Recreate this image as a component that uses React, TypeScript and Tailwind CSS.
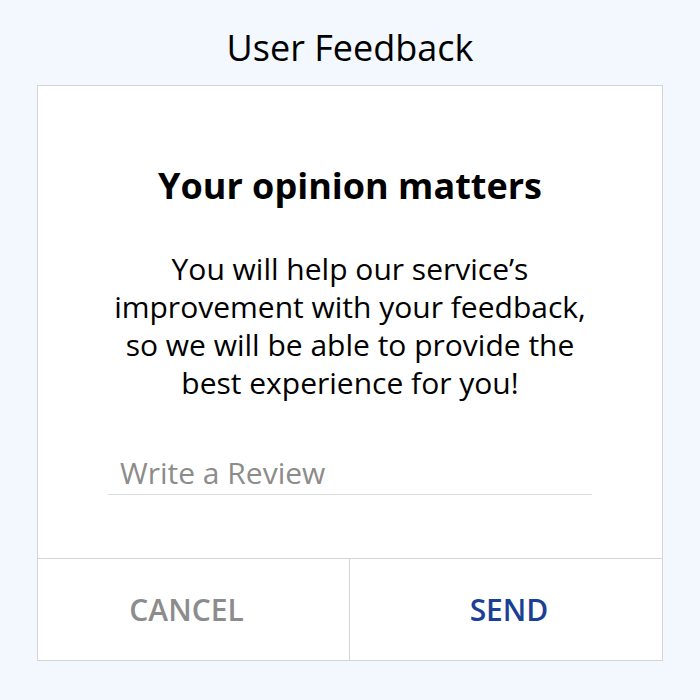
import React from "react";

export default function App() {
  return (
    <div
      className="w-[700px] h-[700px] bg-[#f3f7fe] flex flex-col items-center"
      style={{ fontFamily: '"Open Sans", sans-serif' }}
    >
      <h1 className="text-[36px] leading-[48px] text-black mt-[24px] mb-[13px]">User Feedback</h1>
      <div className="w-[626px] h-[576px] bg-white border border-[#d4d4d4] flex flex-col">
        <div className="flex-1 flex flex-col items-center">
          <h2 className="font-bold leading-[44px] text-black mt-[78px] text-[36px]">Your opinion matters</h2>
          <p className="text-[30px] leading-[38px] text-black text-center mt-[42px] w-[490px]">
            You will help our service’s improvement with your feedback, so we will be able to provide the best experience for you!
          </p>
          <div className="w-[484px] mt-[51px] border-b border-[#dddddd] pb-[1px] px-[12px]">
            <input
              placeholder="Write a Review"
              className="w-full text-[30px] leading-[40px] outline-none placeholder:text-[#8c8c8c] bg-transparent"
              style={{ fontFamily: '"Open Sans", sans-serif' }}
            />
          </div>
        </div>
        <div className="h-[102px] border-t border-[#d4d4d4] grid grid-cols-2">
          <button className="text-[30px] font-semibold text-[#8c8c8c] border-r border-[#d4d4d4] pr-[14px]">CANCEL</button>
          <button className="text-[30px] font-semibold text-[#1a3f94] pl-[6px]">SEND</button>
        </div>
      </div>
    </div>
  );
}
